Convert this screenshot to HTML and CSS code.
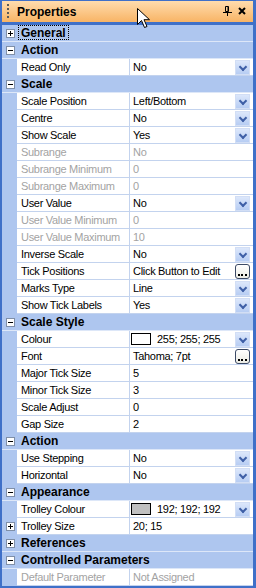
FILE: index.html
```html
<!DOCTYPE html>
<html lang="en">
<head>
    <meta charset="UTF-8">
    <title>Properties</title>
    <link rel="stylesheet" href="styles.css">
</head>
<body>
    <div class="panel">
        <div class="titlebar">
            <span class="grip"></span>
            <span class="title">Properties</span>
            <svg class="pin" width="9" height="10" viewBox="0 0 9 10">
                <path d="M2.5 0.5h3v5h-3z M5 1v4" fill="none" stroke="#000" stroke-width="1"/>
                <path d="M0 6.5h9 M4.5 7v3" fill="none" stroke="#000" stroke-width="1"/>
            </svg>
            <svg class="close" width="8" height="8" viewBox="0 0 8 8">
                <path d="M1 1l6 6 M7 1l-6 6" stroke="#000" stroke-width="2"/>
            </svg>
        </div>

        <div class="grid">
            <div class="row cat"><span class="margin"><i class="box plus"></i></span><span class="label"><span class="focus">General</span></span></div>
            <div class="row cat"><span class="margin"><i class="box"></i></span><span class="label">Action</span></div>
            <div class="row"><span class="margin"></span><span class="name">Read Only</span><span class="value"><span class="text">No</span><b class="dd"></b></span></div>
            <div class="row cat"><span class="margin"><i class="box"></i></span><span class="label">Scale</span></div>
            <div class="row"><span class="margin"></span><span class="name">Scale Position</span><span class="value"><span class="text">Left/Bottom</span><b class="dd"></b></span></div>
            <div class="row"><span class="margin"></span><span class="name">Centre</span><span class="value"><span class="text">No</span><b class="dd"></b></span></div>
            <div class="row"><span class="margin"></span><span class="name">Show Scale</span><span class="value"><span class="text">Yes</span><b class="dd"></b></span></div>
            <div class="row off"><span class="margin"></span><span class="name">Subrange</span><span class="value"><span class="text">No</span></span></div>
            <div class="row off"><span class="margin"></span><span class="name">Subrange Minimum</span><span class="value"><span class="text">0</span></span></div>
            <div class="row off"><span class="margin"></span><span class="name">Subrange Maximum</span><span class="value"><span class="text">0</span></span></div>
            <div class="row"><span class="margin"></span><span class="name">User Value</span><span class="value"><span class="text">No</span><b class="dd"></b></span></div>
            <div class="row off"><span class="margin"></span><span class="name">User Value Minimum</span><span class="value"><span class="text">0</span></span></div>
            <div class="row off"><span class="margin"></span><span class="name">User Value Maximum</span><span class="value"><span class="text">10</span></span></div>
            <div class="row"><span class="margin"></span><span class="name">Inverse Scale</span><span class="value"><span class="text">No</span><b class="dd"></b></span></div>
            <div class="row"><span class="margin"></span><span class="name">Tick Positions</span><span class="value"><span class="text">Click Button to Edit</span><b class="ellipsis"></b></span></div>
            <div class="row"><span class="margin"></span><span class="name">Marks Type</span><span class="value"><span class="text">Line</span><b class="dd"></b></span></div>
            <div class="row"><span class="margin"></span><span class="name">Show Tick Labels</span><span class="value"><span class="text">Yes</span><b class="dd"></b></span></div>
            <div class="row cat"><span class="margin"><i class="box"></i></span><span class="label">Scale Style</span></div>
            <div class="row"><span class="margin"></span><span class="name">Colour</span><span class="value"><i class="swatch"></i><span class="text">255; 255; 255</span><b class="dd"></b></span></div>
            <div class="row"><span class="margin"></span><span class="name">Font</span><span class="value"><span class="text">Tahoma; 7pt</span><b class="ellipsis"></b></span></div>
            <div class="row"><span class="margin"></span><span class="name">Major Tick Size</span><span class="value"><span class="text">5</span></span></div>
            <div class="row"><span class="margin"></span><span class="name">Minor Tick Size</span><span class="value"><span class="text">3</span></span></div>
            <div class="row"><span class="margin"></span><span class="name">Scale Adjust</span><span class="value"><span class="text">0</span></span></div>
            <div class="row"><span class="margin"></span><span class="name">Gap Size</span><span class="value"><span class="text">2</span></span></div>
            <div class="row cat"><span class="margin"><i class="box"></i></span><span class="label">Action</span></div>
            <div class="row"><span class="margin"></span><span class="name">Use Stepping</span><span class="value"><span class="text">No</span><b class="dd"></b></span></div>
            <div class="row"><span class="margin"></span><span class="name">Horizontal</span><span class="value"><span class="text">No</span><b class="dd"></b></span></div>
            <div class="row cat"><span class="margin"><i class="box"></i></span><span class="label">Appearance</span></div>
            <div class="row"><span class="margin"></span><span class="name">Trolley Colour</span><span class="value"><i class="swatch grey"></i><span class="text">192; 192; 192</span><b class="dd"></b></span></div>
            <div class="row"><span class="margin"><i class="box plus"></i></span><span class="name">Trolley Size</span><span class="value"><span class="text">20; 15</span></span></div>
            <div class="row cat"><span class="margin"><i class="box plus"></i></span><span class="label">References</span></div>
            <div class="row cat"><span class="margin"><i class="box"></i></span><span class="label">Controlled Parameters</span></div>
            <div class="row off"><span class="margin"></span><span class="name">Default Parameter</span><span class="value"><span class="text">Not Assigned</span></span></div>
        </div>

        <svg class="cursor" width="13" height="21" viewBox="0 0 13 21">
            <path d="M0.5 0.5v16l4-4 3 7 2.5-1-3-6.8h5.5z" fill="#fff" stroke="#000" stroke-width="1"/>
        </svg>
    </div>
</body>
</html>
```

FILE: styles.css
```css
* {
    box-sizing: border-box;
    margin: 0;
    padding: 0;
}

body {
    font-family: 'Liberation Sans', Arial, sans-serif;
    font-size: 11px;
    letter-spacing: -0.3px;
    color: #000;
    background: #fff;
}

.panel {
    position: relative;
    width: 256px;
    height: 588px;
    background-color: #3f70c8;
    padding: 1px 3px 2px 2px;
}

.titlebar {
    display: flex;
    align-items: center;
    height: 21px;
    margin-bottom: 3px;
    padding-left: 5px;
    padding-right: 7px;
    background: linear-gradient(#ffdcae, #f8b465);
}

.grip {
    width: 2px;
    height: 15px;
    background: repeating-linear-gradient(#5a5a5a 0 2px, transparent 2px 4px);
}

.title {
    margin-left: 8px;
    font-size: 12px;
    font-weight: bold;
    letter-spacing: 0;
}

.pin {
    margin-left: auto;
    margin-top: -2px;
}

.close {
    margin-left: 6px;
    margin-top: -2px;
}

.grid {
    background-color: #fff;
}

.row {
    display: grid;
    grid-template-columns: 15px 113px 123px;
    height: 17px;
    line-height: 16px;
    white-space: nowrap;
}

.margin {
    display: flex;
    align-items: center;
    padding-left: 4px;
    background-color: #aec6ef;
}

.name {
    padding-left: 4px;
    border-right: 1px solid #c3d3ee;
    border-bottom: 1px solid #c3d3ee;
}

.value {
    display: flex;
    align-items: center;
    padding-left: 3px;
    padding-right: 3px;
    border-bottom: 1px solid #c3d3ee;
}

.value .text {
    flex: 1;
}

.off {
    color: #a3a3a3;
}

.row.cat {
    grid-template-columns: 15px 1fr;
    background-color: #aec6ef;
    border-bottom: 1px solid #dde7f8;
}

.label {
    padding-left: 4px;
    font-size: 12px;
    font-weight: bold;
    letter-spacing: 0;
}

.focus {
    display: inline-block;
    height: 15px;
    line-height: 14px;
    margin-left: -3px;
    padding: 0 2px 0 2px;
    border: 1px dotted #000;
}

.box {
    position: relative;
    display: block;
    width: 9px;
    height: 9px;
    background-color: #fff;
    border: 1px solid #7f8fa8;
}

.box::before {
    content: '';
    position: absolute;
    left: 1px;
    top: 3px;
    width: 5px;
    height: 1px;
    background-color: #000;
}

.box.plus::after {
    content: '';
    position: absolute;
    left: 3px;
    top: 1px;
    width: 1px;
    height: 5px;
    background-color: #000;
}

.dd {
    position: relative;
    width: 15px;
    height: 15px;
    border: 1px solid #d2def5;
    background: linear-gradient(#dce7fb, #b7cdf3);
}

.dd::after {
    content: '';
    position: absolute;
    left: 4px;
    top: 3px;
    width: 4px;
    height: 4px;
    border-right: 2px solid #3e5fa6;
    border-bottom: 2px solid #3e5fa6;
    transform: rotate(45deg);
}

.ellipsis {
    position: relative;
    width: 15px;
    height: 15px;
    border: 1px solid #3c4a66;
    border-radius: 3px;
    background: linear-gradient(#ffffff, #ecece4);
}

.ellipsis::after {
    content: '';
    position: absolute;
    left: 2px;
    top: 9px;
    width: 9px;
    height: 2px;
    background: repeating-linear-gradient(90deg, #000 0 2px, transparent 2px 3.5px);
}

.swatch {
    width: 20px;
    height: 12px;
    margin-left: -2px;
    margin-right: 6px;
    border: 1px solid #000;
    background-color: #fff;
}

.swatch.grey {
    background-color: #c0c0c0;
}

.cursor {
    position: absolute;
    left: 137px;
    top: 8px;
}
```
